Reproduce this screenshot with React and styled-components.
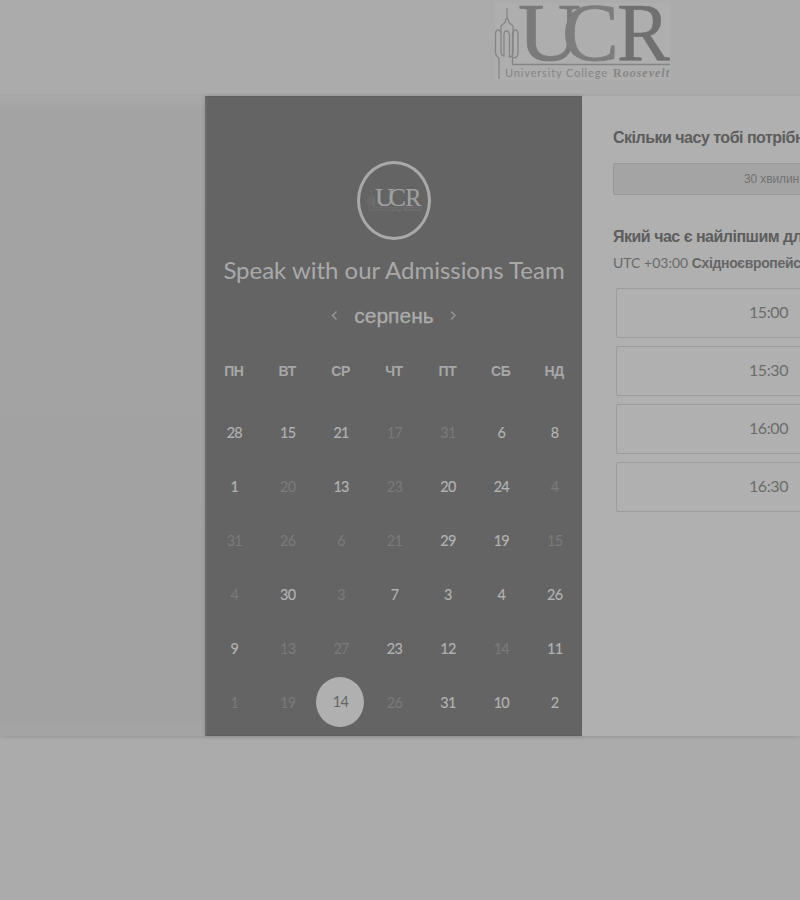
import React from "react";
import styled, { createGlobalStyle } from "styled-components";

const Global = createGlobalStyle`
  * { box-sizing: border-box; }
  body { margin: 0; background: #ababab; overflow: hidden; font-family: "Liberation Sans", Arial, sans-serif; }
`;

const Page = styled.div`
  width: 800px;
  height: 900px;
  overflow: hidden;
  background: #ababab;
`;
const Header = styled.header`
  height: 96px;
  padding-left: 492px;
`;
const Main = styled.main`
  display: flex;
  height: 640px;
  box-shadow: 0 1px 4px rgba(0, 0, 0, 0.12);
`;
const Aside = styled.div`
  width: 205px;
  flex: none;
  background: linear-gradient(#a8a8a8, #a3a3a3 16px, #a2a2a2 620px, #a5a5a5);
`;
const Calendar = styled.section`
  width: 377px;
  flex: none;
  display: flex;
  flex-direction: column;
  align-items: center;
  background: #646464;
  border: 1px solid #5f5f5f;
  border-left: 2px solid #6b6b6b;
  box-shadow: 0 0 4px rgba(0, 0, 0, 0.15);
  padding-top: 64px;
`;
const Avatar = styled.div`
  width: 74px;
  height: 79px;
  flex: none;
  border: 3px solid #a9a9a9;
  border-radius: 50%;
  display: flex;
  align-items: center;
  justify-content: center;
`;
const Title = styled.h1`
  margin: 14px 0 0;
  height: 32px;
  font: 400 24px/32px Lato, sans-serif;
  letter-spacing: -0.02px;
  white-space: nowrap;
  color: #a9a9a9;
`;
const MonthBar = styled.div`
  display: flex;
  align-items: center;
  gap: 14px;
  height: 30px;
  margin-top: 15px;
`;
const Month = styled.div`
  width: 80px;
  text-align: center;
  font-size: 21px;
  line-height: 30px;
  color: #ababab;
  -webkit-text-stroke: 0.3px #ababab;
`;
const Arrow = styled.button`
  border: 0;
  padding: 0;
  width: 10px;
  height: 12px;
  background: none;
  display: flex;
`;
const Week = styled.div`
  display: grid;
  grid-template-columns: repeat(7, 53.4px);
  margin-top: 26px;
  height: 28px;
  align-items: center;
  text-align: center;
  font-size: 14px;
  letter-spacing: -0.4px;
  font-weight: 700;
  color: #a7a7a7;
`;
const Days = styled.div`
  display: grid;
  grid-template-columns: repeat(7, 53.4px);
  grid-auto-rows: 54px;
  margin-top: 21px;
  padding-left: 1px;
`;
const Day = styled.div`
  display: flex;
  align-items: center;
  justify-content: center;
  width: ${(p) => (p.$on ? "48px" : "auto")};
  height: ${(p) => (p.$on ? "50px" : "auto")};
  margin: ${(p) => (p.$on ? "1px 0 0 2px" : "0")};
  padding-bottom: ${(p) => (p.$on ? "1px" : "0")};
  border-radius: ${(p) => (p.$on ? "50%" : "0")};
  background: ${(p) => (p.$on ? "#b0b0b0" : "transparent")};
  font: 400 14.4px/20px Lato, sans-serif;
  letter-spacing: -0.7px;
  -webkit-text-stroke: ${(p) => (p.$open ? "0.2px #b2b2b2" : "0")};
  color: ${(p) => (p.$on ? "#656565" : p.$open ? "#b2b2b2" : "#7b7b7b")};
`;
const Panel = styled.section`
  width: 378px;
  flex: none;
  padding: 31px 30px 0 31px;
  background: #b0b0b0;
`;
const Question = styled.h2`
  margin: 0;
  font-size: 16px;
  line-height: 22px;
  font-weight: 700;
  letter-spacing: -0.5px;
  white-space: nowrap;
  color: #5d5d5d;
`;
const Duration = styled.button`
  display: block;
  width: 317px;
  height: 32px;
  margin: 14px 0 31px;
  padding: 0;
  border: 1px solid #999;
  border-radius: 2px;
  background: #a4a4a4;
  color: #727272;
  font: 12px/30px "Liberation Sans", Arial, sans-serif;
  letter-spacing: -0.1px;
`;
const Zone = styled.div`
  margin: 4px 0 14px;
  height: 22px;
  white-space: nowrap;
  font: 400 14px/22px Lato, sans-serif;
  color: #6a6a6a;
  b { font: 700 14px/22px "Liberation Sans", Arial, sans-serif; letter-spacing: -0.35px; color: #666; }
`;
const Slots = styled.div`
  display: flex;
  flex-direction: column;
  gap: 8px;
  padding-left: 3px;
`;
const Slot = styled.button`
  width: 306px;
  height: 50px;
  padding: 0 1px 2px 0;
  border: 1px solid #9c9c9c;
  border-radius: 2px;
  background: #b0b0b0;
  color: #6c6c6c;
  font: 400 16px/46px Lato, sans-serif;
  letter-spacing: -0.4px;
`;

function Logo({ width, height, light }) {
  const ink = light ? "#a0a0a0" : "#707070";
  const thin = light ? "#7c7c7c" : "#858585";
  return (
    <svg width={width} height={height} viewBox="0 0 180 82" preserveAspectRatio="none" overflow="visible">
      {!light && <rect x="3" y="3" width="176" height="77" fill="#aeaeae" />}
      <g fill="none" stroke={thin} strokeWidth="1.3">
        <path d="M15 8V18L13.500 20V22L9 26V33M15 18L16.500 20V22L21 26V35" />
        <path d="M7 79V58Q3 56 3.500 50V34Q3.500 30 6 30T9 34V52Q9 56 12 56V35Q12 31 14.500 31T17.500 35V57Q21 57 21 52V34Q21 30 23.500 30T26 34V53Q26 58 21 58" />
        <path d="M20.500 33V64.500H178" />
      </g>
      <g fill={ink} fontFamily="Liberation Serif, serif" fontSize="83">
        <text x="26" y="60" textLength="63" lengthAdjust="spacingAndGlyphs" fill={light ? ink : "#7a7a7a"} stroke={light ? ink : "#7a7a7a"} strokeWidth="0.7">U</text>
        <text x="70" y="60" textLength="57" lengthAdjust="spacingAndGlyphs" fill={light ? ink : "#7d7d7d"} stroke={light ? ink : "#7d7d7d"} strokeWidth="0.7">C</text>
        <text x="125" y="60" textLength="53" lengthAdjust="spacingAndGlyphs" stroke={ink} strokeWidth="0.5">R</text>
      </g>
      <text x="13" y="77" fill={thin} fontFamily="Lato, sans-serif" fontSize="11" textLength="102">University College</text>
      <text x="121" y="77" fill={thin} fontFamily="Liberation Serif, serif" fontWeight="700" fontSize="12" textLength="56">
        R<tspan fontStyle="italic">oosevelt</tspan>
      </text>
    </svg>
  );
}

const weekdays = ["ПН", "ВТ", "СР", "ЧТ", "ПТ", "СБ", "НД"];
// A leading minus marks a day that cannot be booked.
const days = [
  28, 15, 21, -17, -31, 6, 8,
  1, -20, 13, -23, 20, 24, -4,
  -31, -26, -6, -21, 29, 19, -15,
  -4, 30, -3, 7, 3, 4, 26,
  9, -13, -27, 23, 12, -14, 11,
  -1, -19, 14, -26, 31, 10, 2,
];
const selected = 37;
const times = ["15:00", "15:30", "16:00", "16:30"];

export default function App() {
  return (
    <Page>
      <Global />
      <Header><Logo width={180} height={82} /></Header>
      <Main>
        <Aside />
        <Calendar>
          <Avatar><Logo width={55} height={25} light /></Avatar>
          <Title>Speak with our Admissions Team</Title>
          <MonthBar>
            <Arrow aria-label="Попередній місяць">
              <svg width="10" height="12" fill="none" stroke="#929292" strokeWidth="1.6"><path d="M6.500 1.500L2.500 5.500L6.500 9.500" /></svg>
            </Arrow>
            <Month>серпень</Month>
            <Arrow aria-label="Наступний місяць">
              <svg width="10" height="12" fill="none" stroke="#929292" strokeWidth="1.6"><path d="M3 1.500L7 5.500L3 9.500" /></svg>
            </Arrow>
          </MonthBar>
          <Week>{weekdays.map((d) => <span key={d}>{d}</span>)}</Week>
          <Days>
            {days.map((d, i) => (
              <Day key={i} $on={i === selected} $open={d > 0 && i !== selected}>{Math.abs(d)}</Day>
            ))}
          </Days>
        </Calendar>
        <Panel>
          <Question>Скільки часу тобі потрібно?</Question>
          <Duration>30 хвилин</Duration>
          <Question>Який час є найліпшим для тебе?</Question>
          <Zone>UTC +03:00 <b>Східноєвропейський час</b></Zone>
          <Slots>{times.map((t) => <Slot key={t}>{t}</Slot>)}</Slots>
        </Panel>
      </Main>
    </Page>
  );
}
